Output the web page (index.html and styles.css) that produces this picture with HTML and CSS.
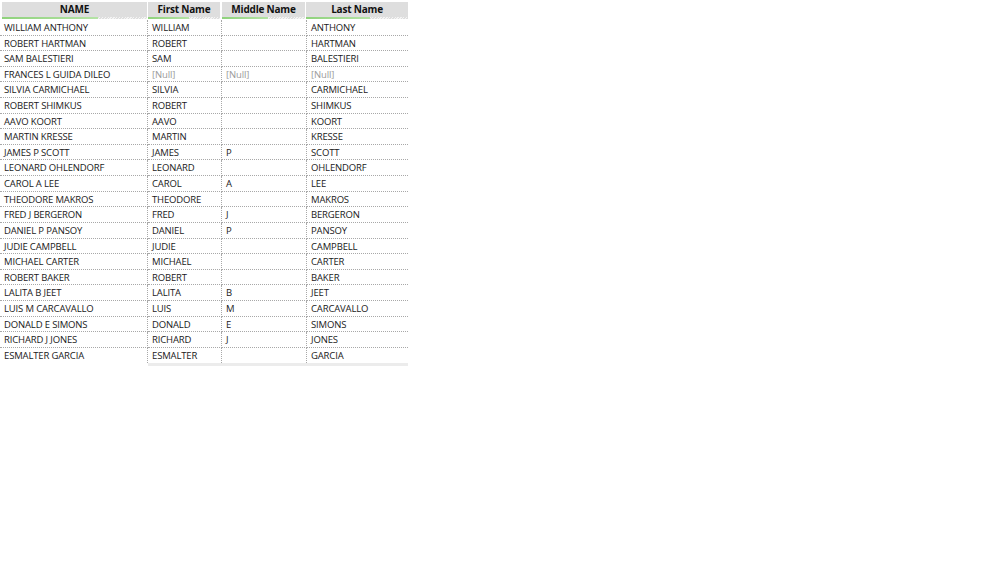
FILE: index.html
```html
<!DOCTYPE html>
<html>
<head>
<meta charset="utf-8">
<link rel="stylesheet" href="styles.css">
</head>
<body>
<div class="grid">
  <div class="hd"><span class="lbl">NAME</span><div class="bar"><div class="fill" style="width:66%"></div></div></div>
  <div class="hd"><span class="lbl">First Name</span><div class="bar"><div class="fill" style="width:57%"></div></div></div>
  <div class="hd"><span class="lbl">Middle Name</span><div class="bar"><div class="fill" style="width:56%"></div></div></div>
  <div class="hd"><span class="lbl">Last Name</span><div class="bar"><div class="fill" style="width:63%"></div></div></div>

  <div class="c">WILLIAM ANTHONY</div><div class="c">WILLIAM</div><div class="c"></div><div class="c">ANTHONY</div>
  <div class="c">ROBERT HARTMAN</div><div class="c">ROBERT</div><div class="c"></div><div class="c">HARTMAN</div>
  <div class="c">SAM BALESTIERI</div><div class="c">SAM</div><div class="c"></div><div class="c">BALESTIERI</div>
  <div class="c">FRANCES L GUIDA DILEO</div><div class="c null">[Null]</div><div class="c null">[Null]</div><div class="c null">[Null]</div>
  <div class="c">SILVIA CARMICHAEL</div><div class="c">SILVIA</div><div class="c"></div><div class="c">CARMICHAEL</div>
  <div class="c">ROBERT SHIMKUS</div><div class="c">ROBERT</div><div class="c"></div><div class="c">SHIMKUS</div>
  <div class="c">AAVO KOORT</div><div class="c">AAVO</div><div class="c"></div><div class="c">KOORT</div>
  <div class="c">MARTIN KRESSE</div><div class="c">MARTIN</div><div class="c"></div><div class="c">KRESSE</div>
  <div class="c">JAMES P SCOTT</div><div class="c">JAMES</div><div class="c">P</div><div class="c">SCOTT</div>
  <div class="c">LEONARD OHLENDORF</div><div class="c">LEONARD</div><div class="c"></div><div class="c">OHLENDORF</div>
  <div class="c">CAROL A LEE</div><div class="c">CAROL</div><div class="c">A</div><div class="c">LEE</div>
  <div class="c">THEODORE MAKROS</div><div class="c">THEODORE</div><div class="c"></div><div class="c">MAKROS</div>
  <div class="c">FRED J BERGERON</div><div class="c">FRED</div><div class="c">J</div><div class="c">BERGERON</div>
  <div class="c">DANIEL P PANSOY</div><div class="c">DANIEL</div><div class="c">P</div><div class="c">PANSOY</div>
  <div class="c">JUDIE CAMPBELL</div><div class="c">JUDIE</div><div class="c"></div><div class="c">CAMPBELL</div>
  <div class="c">MICHAEL CARTER</div><div class="c">MICHAEL</div><div class="c"></div><div class="c">CARTER</div>
  <div class="c">ROBERT BAKER</div><div class="c">ROBERT</div><div class="c"></div><div class="c">BAKER</div>
  <div class="c">LALITA B JEET</div><div class="c">LALITA</div><div class="c">B</div><div class="c">JEET</div>
  <div class="c">LUIS M CARCAVALLO</div><div class="c">LUIS</div><div class="c">M</div><div class="c">CARCAVALLO</div>
  <div class="c">DONALD E SIMONS</div><div class="c">DONALD</div><div class="c">E</div><div class="c">SIMONS</div>
  <div class="c">RICHARD J JONES</div><div class="c">RICHARD</div><div class="c">J</div><div class="c">JONES</div>
  <div class="c last">ESMALTER GARCIA</div><div class="c last">ESMALTER</div><div class="c last"></div><div class="c last">GARCIA</div>

  <div class="foot-gap"></div><div class="foot"></div>
</div>
</body>
</html>
```
FILE: styles.css
```css
html, body {
  margin: 0;
  padding: 0;
  background: #fff;
}
body {
  padding: 2px 0 0 0;
  font-family: "Open Sans", "Noto Sans", sans-serif;
  font-size: 9.5px;
  letter-spacing: -0.15px;
  color: #1a1a1a;
}
.grid {
  display: grid;
  grid-template-columns: 148px 74px 85px 101px;
  width: 408px;
}
.hd {
  height: 17px;
  background: #dedede;
  margin-right: 2px;
  margin-bottom: 1px;
  display: flex;
  flex-direction: column;
  justify-content: space-between;
  box-sizing: border-box;
}
.hd:first-child {
  margin-left: 2px;
  margin-right: 1px;
}
.hd:nth-child(4) {
  margin-right: 0;
  margin-left: -1px;
}
.lbl {
  display: block;
  text-align: center;
  font-weight: 700;
  font-size: 10px;
  letter-spacing: -0.2px;
  line-height: 15px;
  color: #111;
}
.bar {
  height: 3px;
  background: repeating-linear-gradient(135deg, #dedede 0 1px, #f4f4f4 1px 2px);
}
.fill {
  height: 2px;
  background: linear-gradient(90deg, #8fd27c, #b5e3a6);
}
.c {
  height: 15.62px;
  line-height: 15px;
  padding-left: 4px;
  box-sizing: border-box;
  border-bottom: 1px dotted #a8a8a8;
  border-right: 1px dotted #a8a8a8;
  white-space: nowrap;
  overflow: hidden;
}
.c:nth-child(4n) {
  border-right: none;
}
.c.last {
  border-bottom: none;
}
.null {
  color: #9a9a9a;
}
.foot-gap {
  height: 3px;
}
.foot {
  grid-column: 2 / 5;
  height: 3px;
  background: #ececec;
}
```
